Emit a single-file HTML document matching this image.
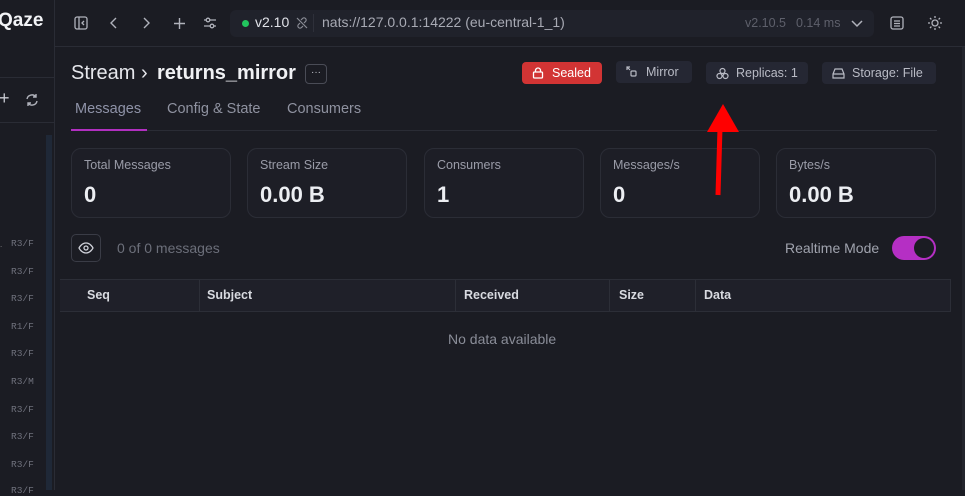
<!DOCTYPE html>
<html><head><style>
*{box-sizing:border-box;margin:0;padding:0}
body{width:965px;height:490px;background:#1b1c23;font-family:"Liberation Sans",sans-serif;color:#e6e7ec;position:relative;overflow:hidden}
.a{position:absolute}
.card{position:absolute;top:148px;width:160px;height:70px;border:1px solid #2b2d36;border-radius:10px;background:#1d1e26}
.card .l{position:absolute;left:12px;top:9px;font-size:12.5px;color:#9a9ca8}
.card .v{position:absolute;left:12px;top:33px;font-size:22px;font-weight:bold;color:#eceef2}
.badge{position:absolute;top:62px;height:22px;border-radius:4px;background:#252733;font-size:12.5px;color:#b9bbc5;line-height:22px;padding-left:30px}
.th{position:absolute;top:279px;height:32px;line-height:32px;font-size:12.5px;font-weight:bold;color:#d8dae0}
.rl{position:absolute;left:11px;font-family:"Liberation Mono",monospace;font-size:9.5px;color:#6f717c}
</style></head><body>
<!-- sidebar -->
<div class="a" style="left:54px;top:0;width:1px;height:490px;background:#2a2c35"></div>
<div class="a" style="left:0;top:77px;width:54px;height:1px;background:#2a2c35"></div>
<div class="a" style="left:0;top:122px;width:54px;height:1px;background:#2a2c35"></div>
<div class="a" style="left:-2px;top:10px;font-size:19px;font-weight:bold;color:#f2f3f6">Qaze</div>
<div class="a" style="left:-1px;top:88px;font-size:18px;color:#c8cad2">+</div>
<svg class="a" style="left:25px;top:93px" width="14" height="14" viewBox="0 0 14 14" fill="none" stroke="#b0b2bb" stroke-width="1.4"><path d="M2 6a5 5 0 0 1 9-2M12 8a5 5 0 0 1-9 2M11 1v3H8M3 13v-3h3"/></svg>
<div class="a" style="left:46px;top:135px;width:6px;height:355px;background:#1f2837"></div>
<div class="rl" style="top:238px">R3/F</div><div class="rl" style="top:266px">R3/F</div><div class="rl" style="top:293px">R3/F</div><div class="rl" style="top:321px">R1/F</div><div class="rl" style="top:348px">R3/F</div><div class="rl" style="top:376px">R3/M</div><div class="rl" style="top:404px">R3/F</div><div class="rl" style="top:431px">R3/F</div><div class="rl" style="top:459px">R3/F</div><div class="rl" style="top:485px">R3/F</div>
<div class="a" style="left:0;top:240px;font-size:8px;color:#888">.</div>
<!-- topbar -->
<div class="a" style="left:55px;top:46px;width:910px;height:1px;background:#2a2c35"></div>
<svg class="a" style="left:74px;top:16px" width="14" height="14" viewBox="0 0 14 14" fill="none" stroke="#b0b2bb" stroke-width="1.3"><rect x="1" y="1" width="12" height="12" rx="2"/><path d="M5 1v12M10 5L8 7l2 2"/></svg>
<svg class="a" style="left:109px;top:17px" width="10" height="12" viewBox="0 0 10 12" fill="none" stroke="#b0b2bb" stroke-width="1.4"><path d="M7 1L2 6l5 5"/></svg>
<svg class="a" style="left:141px;top:17px" width="10" height="12" viewBox="0 0 10 12" fill="none" stroke="#b0b2bb" stroke-width="1.4"><path d="M3 1l5 5-5 5"/></svg>
<svg class="a" style="left:173px;top:17px" width="13" height="13" viewBox="0 0 13 13" fill="none" stroke="#b0b2bb" stroke-width="1.4"><path d="M6.5 1v11M1 6.5h11"/></svg>
<svg class="a" style="left:203px;top:16px" width="14" height="14" viewBox="0 0 14 14" fill="none" stroke="#b0b2bb" stroke-width="1.3"><path d="M1 4h12M1 10h12"/><circle cx="5" cy="4" r="1.8" fill="#1b1c23"/><circle cx="9" cy="10" r="1.8" fill="#1b1c23"/></svg>
<div class="a" style="left:230px;top:10px;width:644px;height:27px;border-radius:6px;background:#20222b"></div>
<div class="a" style="left:242px;top:20px;width:7px;height:7px;border-radius:50%;background:#22c55e"></div>
<div class="a" style="left:255px;top:14px;font-size:14px;color:#e0e2e8">v2.10</div>
<svg class="a" style="left:296px;top:17px" width="12" height="12" viewBox="0 0 12 12" fill="none" stroke="#8a8c96" stroke-width="1.2"><path d="M5 3l1.5-1.5a2 2 0 0 1 3 3L8 6M7 9l-1.5 1.5a2 2 0 0 1-3-3L4 6M1 1l10 10"/></svg>
<div class="a" style="left:313px;top:14px;width:1px;height:18px;background:#2e303a"></div>
<div class="a" style="left:322px;top:14px;font-size:14px;color:#a8aab4">nats://127.0.0.1:14222 (eu-central-1_1)</div>
<div class="a" style="left:745px;top:16px;font-size:12.5px;color:#5e606b">v2.10.5</div>
<div class="a" style="left:796px;top:16px;font-size:12.5px;color:#5e606b">0.14 ms</div>
<svg class="a" style="left:851px;top:18px" width="12" height="10" viewBox="0 0 12 10" fill="none" stroke="#b0b2bb" stroke-width="1.5"><path d="M1 3l5 5 5-5"/></svg>
<svg class="a" style="left:890px;top:16px" width="14" height="14" viewBox="0 0 14 14" fill="none" stroke="#b0b2bb" stroke-width="1.3"><rect x="1" y="1" width="12" height="12" rx="2"/><path d="M4 5h6M4 7.5h6M4 10h6"/></svg>
<svg class="a" style="left:927px;top:15px" width="16" height="16" viewBox="0 0 16 16" fill="none" stroke="#b0b2bb" stroke-width="1.3"><circle cx="8" cy="8" r="3"/><path d="M8 1v2M8 13v2M1 8h2M13 8h2M3 3l1.4 1.4M11.6 11.6L13 13M3 13l1.4-1.4M11.6 4.4L13 3"/></svg>
<!-- header -->
<div class="a" style="left:71px;top:62px;font-size:20px;color:#e6e7ec">Stream ›</div>
<div class="a" style="left:157px;top:62px;font-size:20px;font-weight:bold;color:#f0f1f4">returns_mirror</div>
<div class="a" style="left:305px;top:64px;width:22px;height:20px;border:1px solid #4a4c56;border-radius:4px;font-size:10px;color:#c0c2ca;text-align:center;line-height:15px">···</div>
<div class="badge" style="left:522px;width:80px;background:#d23434;color:#fff"><svg class="a" style="left:10px;top:5px" width="12" height="12" viewBox="0 0 12 12" fill="none" stroke="#fff" stroke-width="1.3"><rect x="1.5" y="5" width="9" height="6" rx="1"/><path d="M3.5 5V3.5a2.5 2.5 0 0 1 5 0V5"/></svg>Sealed</div>
<div class="badge" style="left:616px;width:76px;top:61px"><svg class="a" style="left:10px;top:5px" width="12" height="12" viewBox="0 0 12 12" fill="none" stroke="#b9bbc5" stroke-width="1.2"><path d="M1 4V1h3M1 1l3 3"/><rect x="5" y="5" width="5" height="5" rx="1"/></svg>Mirror</div>
<div class="badge" style="left:706px;width:102px"><svg class="a" style="left:10px;top:5px" width="13" height="13" viewBox="0 0 13 13" fill="none" stroke="#b9bbc5" stroke-width="1.2"><circle cx="6.5" cy="4" r="2.5"/><circle cx="3.5" cy="9" r="2.5"/><circle cx="9.5" cy="9" r="2.5"/></svg>Replicas: 1</div>
<div class="badge" style="left:822px;width:114px"><svg class="a" style="left:10px;top:6px" width="13" height="11" viewBox="0 0 13 11" fill="none" stroke="#b9bbc5" stroke-width="1.2"><path d="M1 6l2-5h7l2 5v4H1z M1 6h11"/></svg>Storage: File</div>
<!-- tabs -->
<div class="a" style="left:75px;top:101px;font-size:14.5px;color:#8f93a8">Messages</div>
<div class="a" style="left:167px;top:101px;font-size:14.5px;color:#8f92a0">Config &amp; State</div>
<div class="a" style="left:287px;top:101px;font-size:14.5px;color:#8f92a0">Consumers</div>
<div class="a" style="left:71px;top:130px;width:866px;height:1px;background:#2a2c35"></div>
<div class="a" style="left:71px;top:129px;width:76px;height:2px;background:#b12fc0"></div>
<!-- cards -->
<div class="card" style="left:71px"><div class="l">Total Messages</div><div class="v">0</div></div>
<div class="card" style="left:247px"><div class="l">Stream Size</div><div class="v">0.00 B</div></div>
<div class="card" style="left:424px"><div class="l">Consumers</div><div class="v">1</div></div>
<div class="card" style="left:600px"><div class="l">Messages/s</div><div class="v">0</div></div>
<div class="card" style="left:776px"><div class="l">Bytes/s</div><div class="v">0.00 B</div></div>
<!-- toolbar -->
<div class="a" style="left:71px;top:234px;width:30px;height:28px;border:1px solid #3a3c46;border-radius:5px"></div>
<svg class="a" style="left:78px;top:241px" width="16" height="14" viewBox="0 0 16 14" fill="none" stroke="#d0d2da" stroke-width="1.3"><path d="M1 7s2.5-5 7-5 7 5 7 5-2.5 5-7 5-7-5-7-5z"/><circle cx="8" cy="7" r="2"/></svg>
<div class="a" style="left:117px;top:240px;font-size:14px;color:#6c6f7a">0 of 0 messages</div>
<div class="a" style="left:785px;top:240px;font-size:14px;color:#a0a3ae">Realtime Mode</div>
<div class="a" style="left:892px;top:236px;width:44px;height:24px;border-radius:12px;background:#b52fc4"></div>
<div class="a" style="left:914px;top:238px;width:20px;height:20px;border-radius:50%;background:#1b1c23"></div>
<!-- table -->
<div class="a" style="left:60px;top:279px;width:891px;height:33px;background:#1f2029;border-top:1px solid #2c2e37;border-bottom:1px solid #2c2e37;border-right:1px solid #2c2e37"></div>
<div class="a" style="left:199px;top:280px;width:1px;height:31px;background:#2c2e37"></div>
<div class="a" style="left:455px;top:280px;width:1px;height:31px;background:#2c2e37"></div>
<div class="a" style="left:609px;top:280px;width:1px;height:31px;background:#2c2e37"></div>
<div class="a" style="left:695px;top:280px;width:1px;height:31px;background:#2c2e37"></div>
<div class="th" style="left:87px">Seq</div><div class="th" style="left:207px">Subject</div><div class="th" style="left:464px">Received</div><div class="th" style="left:619px">Size</div><div class="th" style="left:704px">Data</div>
<div class="a" style="left:448px;top:331px;font-size:14px;color:#8a8d98">No data available</div>
<div class="a" style="left:962px;top:47px;width:3px;height:443px;background:#23252d"></div>
<!-- red arrow -->
<svg class="a" style="left:700px;top:100px" width="45" height="100" viewBox="0 0 45 100"><path d="M18 95L20 28" stroke="#f00" stroke-width="5"/><path d="M23 4L7 32h32z" fill="#f00"/></svg>
</body></html>
